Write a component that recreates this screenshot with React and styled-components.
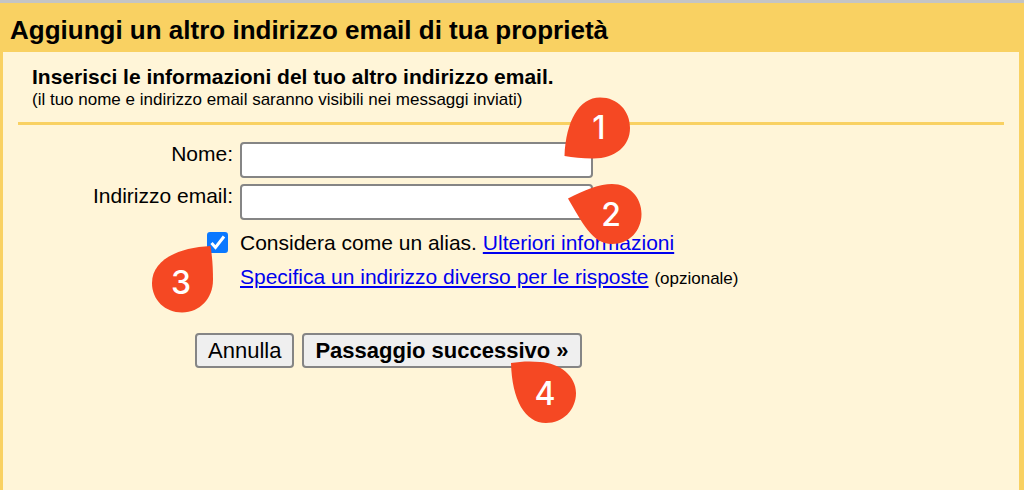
import { useState } from "react"
import styled, { createGlobalStyle } from "styled-components"

const GlobalStyle = createGlobalStyle`
    * {
        box-sizing : border-box;
    }
    body {
        margin : 0;
        background-color : #fff5d8;
        color : #000;
        font-family : "Liberation Sans", Arial, Helvetica, sans-serif;
        font-size : 21px;
        line-height : 24px;
    }
`

const Page = styled.div`
    display : flex;
    flex-flow : column;
    min-height : 100vh;
    border-top : 3px solid #c4c4c4;
    background-color : #f9d162;
`

const Title = styled.h1`
    margin : 0;
    padding : 12px 10px 7px;
    font-size : 26px;
    line-height : 30px;
`

const Panel = styled.main`
    flex : 1;
    margin : 0 5px 0 3px;
    padding : 13px 15px;
    background-color : #fff5d8;
`

const Intro = styled.header`
    padding : 0 14px 11px;
    border-bottom : 3px solid #f9d162;
    > h2 {
        margin : 0;
        font-size : 21px;
        line-height : 24px;
    }
    > p {
        margin : 0;
        font-size : 17px;
        line-height : 22px;
    }
`

const Fields = styled.div`
    display : grid;
    grid-template-columns : 215px 1fr;
    gap : 6px 7px;
    padding-top : 17px;
`

const Label = styled.label`
    text-align : right;
`

const InputBox = styled.div`
    position : relative;
    width : 353px;
    height : 36px;
    > input {
        display : block;
        width : 100%;
        height : 100%;
        padding : 0 8px;
        border : 2px solid #858585;
        border-radius : 4px;
        background-color : white;
        font : inherit;
    }
`

const CheckBox = styled.div`
    position : relative;
    justify-self : end;
    width : 21px;
    height : 21px;
    margin : 6px 5px 0 0;
    > input {
        appearance : none;
        display : block;
        width : 21px;
        height : 21px;
        margin : 0;
        border : 2px solid #858585;
        border-radius : 3px;
        background-color : white;
    }
    > input:checked {
        border-color : #0a78ff;
        background-color : #0a78ff;
    }
`

const Tick = styled.svg`
    position : absolute;
    inset : 0;
    fill : none;
    stroke : white;
    stroke-width : 3px;
    pointer-events : none;
`

const Options = styled.div`
    display : grid;
    gap : 10px;
    padding-top : 5px;
    a {
        color : #0000ee;
    }
    small {
        font-size : 17px;
    }
`

const Actions = styled.div`
    display : flex;
    gap : 8px;
    padding : 42px 0 0 177px;
`

const ButtonBox = styled.div`
    position : relative;
`

const Button = styled.button`
    display : block;
    height : 35px;
    padding : 0 11px;
    border : 2px solid #858585;
    border-radius : 4px;
    background-color : #efefef;
    color : #000;
    font-family : inherit;
    font-size : 22px;
    font-weight : ${props => props.$primary ? "bold" : "normal"};
    line-height : 24px;
`

const Pin = styled.svg`
    position : absolute;
    z-index : 1;
    left : ${props => props.$left}px;
    top : ${props => props.$top}px;
    overflow : visible;
    pointer-events : none;
    path {
        fill : #f54823;
    }
    text {
        fill : white;
        font-family : Inter, sans-serif;
        font-size : 32px;
        font-weight : 500;
        text-anchor : middle;
    }
`

// the outline of each pin, with its tip turned to the control it points at
const pins = {
    1 : { d : "M.5 59C2 24 15 .5 36 .5C54 .5 66 14 66 31C66 49 51 62 28 61.5C18 61.5 9 60.5.5 59Z", x : 35, y : 42 },
    2 : { d : "M0 14.5C16 6 32 0 44 0C61 0 73.5 13 73.5 30C73.5 47 61 60 44 60C24 60 14 38 0 14.5Z", x : 43, y : 42 },
    3 : { d : "M58.5 0C60.5 12 61 24 61 34C61 52 48 66.5 30 66.5C13 66.5 0 54 0 37C0 14 26 1.5 58.5 0Z", x : 29, y : 48 },
    4 : { d : "M0 2C9 .5 19 0 29 1C49 2 65 15 65 32C65 49 52 62 35 62C14 62 1 39 0 2Z", x : 34, y : 44 },
}

function Marker({number, left, top}){
    const pin = pins[number];
    return  <Pin $left={left} $top={top} width="74" height="67">
                <path d={pin.d} />
                <text x={pin.x} y={pin.y}>{number}</text>
            </Pin>
}

export default function App(){
    const [isAlias, setIsAlias] = useState(true);
    return  <>
        <GlobalStyle />
        <Page>
            <Title>Aggiungi un altro indirizzo email di tua proprietà</Title>
            <Panel>
                <Intro>
                    <h2>Inserisci le informazioni del tuo altro indirizzo email.</h2>
                    <p>(il tuo nome e indirizzo email saranno visibili nei messaggi inviati)</p>
                </Intro>
                <form onSubmit={(e) => e.preventDefault()}>
                    <Fields>
                        <Label htmlFor="name">Nome:</Label>
                        <InputBox>
                            <input type="text" id="name" name="name" />
                            <Marker number={1} left={324} top={-45} />
                        </InputBox>
                        <Label htmlFor="email">Indirizzo email:</Label>
                        <InputBox>
                            <input type="email" id="email" name="email" />
                            <Marker number={2} left={328} top={0} />
                        </InputBox>
                        <CheckBox>
                            <input type="checkbox" id="alias" name="alias" checked={isAlias} onChange={(e) => setIsAlias(e.target.checked)} />
                            {isAlias &&
                                <Tick width="21" height="21" viewBox="0 0 21 21">
                                    <path d="M4.5 11L8.5 15.5L17 4.5" />
                                </Tick>
                            }
                            <Marker number={3} left={-55} top={14} />
                        </CheckBox>
                        <Options>
                            <div>
                                <label htmlFor="alias">Considera come un alias.</label> <a href="#info">Ulteriori informazioni</a>
                            </div>
                            <div>
                                <a href="#reply-to">Specifica un indirizzo diverso per le risposte</a> <small>(opzionale)</small>
                            </div>
                        </Options>
                    </Fields>
                    <Actions>
                        <Button type="button">Annulla</Button>
                        <ButtonBox>
                            <Button type="submit" $primary>Passaggio successivo »</Button>
                            <Marker number={4} left={209} top={28} />
                        </ButtonBox>
                    </Actions>
                </form>
            </Panel>
        </Page>
    </>
}
